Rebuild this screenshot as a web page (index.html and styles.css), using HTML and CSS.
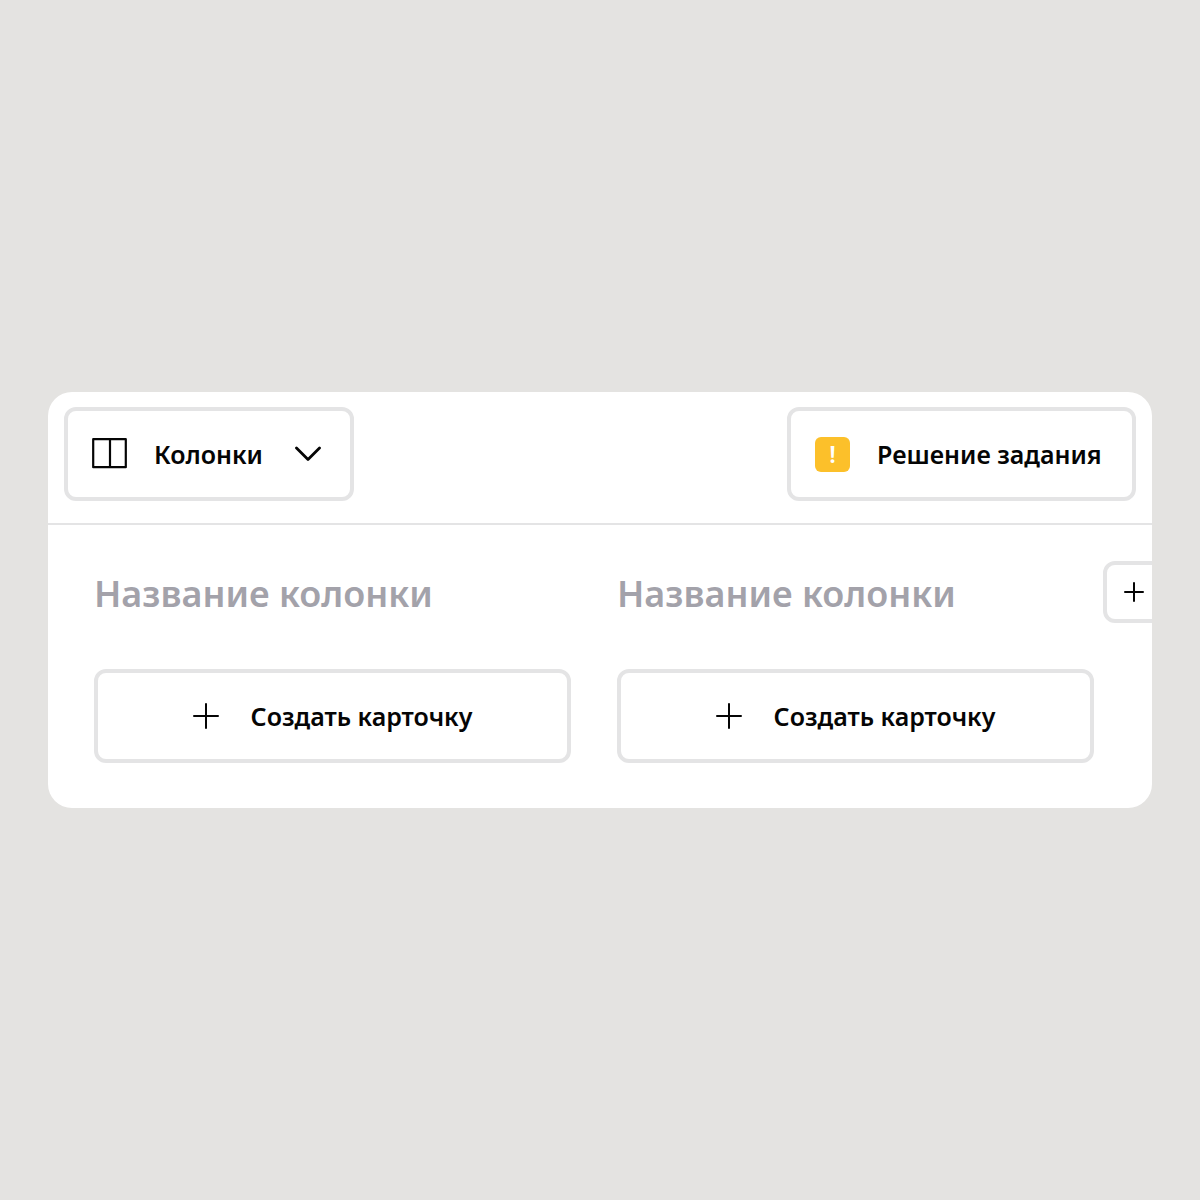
FILE: index.html
```html
<!DOCTYPE html>
<html lang="ru">
<head>
<meta charset="utf-8">
<meta name="viewport" content="width=device-width, initial-scale=1">
<title>Колонки</title>
<link rel="stylesheet" href="styles.css">
</head>
<body>
<main class="panel">
  <header class="toolbar">
    <button class="button button-view" type="button" aria-haspopup="listbox">
      <svg class="icon icon-columns" width="35" height="32" viewBox="0 0 35 32" aria-hidden="true"><path d="M1.2 1.2h32.6v28H1.2zM18 1.2v28"/></svg>
      <span>Колонки</span>
      <svg class="icon icon-chevron" width="26" height="16" viewBox="0 0 26 16" aria-hidden="true"><path d="M1.5 2 13 13.500 24.500 2"/></svg>
    </button>
    <button class="button button-solution" type="button">
      <span class="badge" aria-hidden="true">!</span>
      <span>Решение задания</span>
    </button>
  </header>
  <div class="board">
    <div class="columns">
      <section class="column">
        <input class="column-title" type="text" placeholder="Название колонки" aria-label="Название колонки">
        <button class="button button-create" type="button">
          <svg class="icon" width="26" height="26" viewBox="0 0 26 26" aria-hidden="true"><path d="M13 1v24M1 13h24"/></svg>
          <span>Создать карточку</span>
        </button>
      </section>
      <section class="column">
        <input class="column-title" type="text" placeholder="Название колонки" aria-label="Название колонки">
        <button class="button button-create" type="button">
          <svg class="icon" width="26" height="26" viewBox="0 0 26 26" aria-hidden="true"><path d="M13 1v24M1 13h24"/></svg>
          <span>Создать карточку</span>
        </button>
      </section>
    </div>
    <div class="add-slot">
      <button class="button button-add" type="button" aria-label="Добавить колонку">
        <svg class="icon" width="20" height="20" viewBox="0 0 20 20" aria-hidden="true"><path d="M10 1v18M1 10h18"/></svg>
      </button>
    </div>
  </div>
</main>
</body>
</html>
```

FILE: styles.css
```css
* {
  box-sizing: border-box;
}

body {
  margin: 0;
  min-height: 100vh;
  padding: 48px;
  display: flex;
  align-items: center;
  background: #e4e3e1;
  color: #050505;
  font-family: "Noto Sans", "Open Sans", sans-serif;
}

.panel {
  flex: 1;
  min-width: 0;
  overflow: hidden;
  border-radius: 24px;
  background: #fff;
}

.toolbar {
  display: flex;
  justify-content: space-between;
  padding: 15px 16px 22px;
  border-bottom: 2px solid #e4e4e5;
}

.button {
  display: flex;
  align-items: center;
  height: 94px;
  padding: 0 24px;
  border: 4px solid #e4e4e5;
  border-radius: 12px;
  background: #fff;
  color: inherit;
  font: 600 25px/36px "Noto Sans", "Open Sans", sans-serif;
  white-space: nowrap;
  cursor: pointer;
}

.button-view,
.button-solution {
  gap: 27px;
}

.button-view {
  min-width: 290px;
}

.button-solution {
  min-width: 349px;
}

.icon {
  flex: none;
  fill: none;
  stroke: currentColor;
  stroke-width: 2;
  stroke-linecap: round;
  stroke-linejoin: round;
}

.icon-columns {
  stroke-width: 2.2;
}

.icon-chevron {
  margin: 0 5px 0 auto;
  stroke-width: 2.8;
}

.badge {
  width: 35px;
  height: 35px;
  border-radius: 6px;
  background: #fcc02a;
  color: #fff;
  font-size: 24px;
  line-height: 34px;
  text-align: center;
}

.board {
  display: flex;
  gap: 9px;
  padding: 36px 0 45px 46px;
}

.columns {
  flex: 1;
  min-width: 0;
  display: grid;
  grid-template-columns: 1fr 1fr;
  gap: 46px;
}

.column {
  min-width: 0;
  display: flex;
  flex-direction: column;
  gap: 46px;
}

.column-title {
  width: 100%;
  height: 62px;
  padding: 2px 0 0;
  border: 0;
  outline: 0;
  background: none;
  color: inherit;
  font: 600 36px/60px "Noto Sans", "Open Sans", sans-serif;
}

.column-title::placeholder {
  color: #a3a2aa;
  opacity: 1;
}

.button-create {
  justify-content: center;
  gap: 32px;
}

.add-slot {
  flex: 0 0 49px;
  min-width: 0;
}

.button-add {
  justify-content: center;
  width: 62px;
  height: 62px;
  padding: 0;
}
```
